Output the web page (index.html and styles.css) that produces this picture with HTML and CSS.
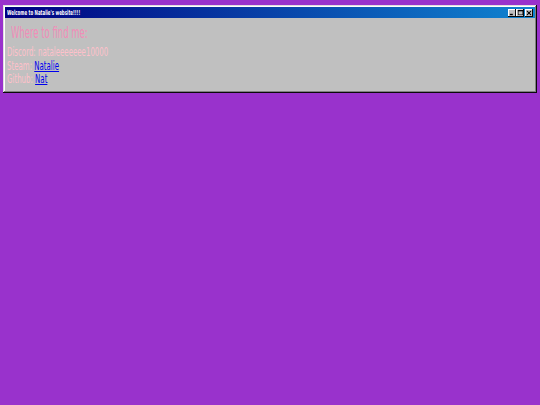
FILE: index.html
```html
<!DOCTYPE html>
<html>
<head>
<meta charset="utf-8">
<link rel="stylesheet" href="styles.css">
</head>
<body>
<div class="window">
  <div class="title-bar">
    <div class="title-text">Welcome to Natalie's website!!!!</div>
    <div class="controls">
      <button class="ctl"><svg width="6" height="6" viewBox="0 0 6 6"><rect x="0" y="4" width="4" height="2" fill="#000"/></svg></button>
      <button class="ctl"><svg width="7" height="7" viewBox="0 0 7 7"><rect x="0.5" y="0.5" width="6" height="6" fill="none" stroke="#000"/><rect x="0" y="0" width="7" height="2" fill="#000"/></svg></button>
      <button class="ctl close"><svg width="6" height="6" viewBox="0 0 6 6"><path d="M0 0L6 6M6 0L0 6" stroke="#000" stroke-width="1.3"/></svg></button>
    </div>
  </div>
  <div class="window-body">
    <h1 class="heading">Where to find me:</h1>
    <div class="line">Discord: nataleeeeeee10000</div>
    <div class="line">Steam: <a href="#">Natalie</a></div>
    <div class="line">Github: <a href="#">Nat</a></div>
  </div>
</div>
</body>
</html>
```
FILE: styles.css
```css
html, body {
  margin: 0;
  padding: 0;
}
body {
  background: #9932cc;
  width: 540px;
  height: 405px;
  overflow: hidden;
  padding-top: 5px;
  box-sizing: border-box;
}
.window {
  margin: 0 3px;
  width: 534px;
  height: 88px;
  box-sizing: border-box;
  background: #c0c0c0;
  padding: 2px;
  box-shadow: inset -1px -1px #0a0a0a, inset 1px 1px #dfdfdf, inset -2px -2px #808080, inset 2px 2px #fff;
}
.title-bar {
  height: 11px;
  background: linear-gradient(90deg, #000080, #1084d0);
  display: flex;
  align-items: center;
  justify-content: space-between;
  padding: 0 2px;
}
.title-text {
  color: #fff;
  font-family: "DejaVu Sans Condensed", "DejaVu Sans", sans-serif;
  font-weight: bold;
  font-size: 7px;
  transform: scaleX(0.63);
  transform-origin: left center;
  white-space: nowrap;
}
.controls {
  display: flex;
}
.ctl {
  width: 8px;
  height: 8px;
  padding: 0;
  margin: 0;
  border: none;
  background: #c0c0c0;
  box-shadow: inset -1px -1px #0a0a0a, inset 1px 1px #fff;
  display: flex;
  align-items: center;
  justify-content: center;
}
.ctl svg { display: block; transform: scale(0.8); }
.ctl.close { margin-left: 1px; }
.window-body {
  padding: 6px 2px 0 2px;
  font-family: "DejaVu Sans Condensed", "DejaVu Sans", sans-serif;
}
.heading {
  margin: 0 0 3px 4px;
  font-size: 16px;
  font-weight: normal;
  color: #f28cb8;
  line-height: 18px;
  transform: scaleX(0.59);
  transform-origin: left center;
  white-space: nowrap;
}
.line {
  font-size: 13px;
  line-height: 13.5px;
  color: #ffc0cb;
  transform: scaleX(0.6);
  transform-origin: left center;
  white-space: nowrap;
}
.line a {
  color: #0000ee;
  text-decoration: underline;
}
```
